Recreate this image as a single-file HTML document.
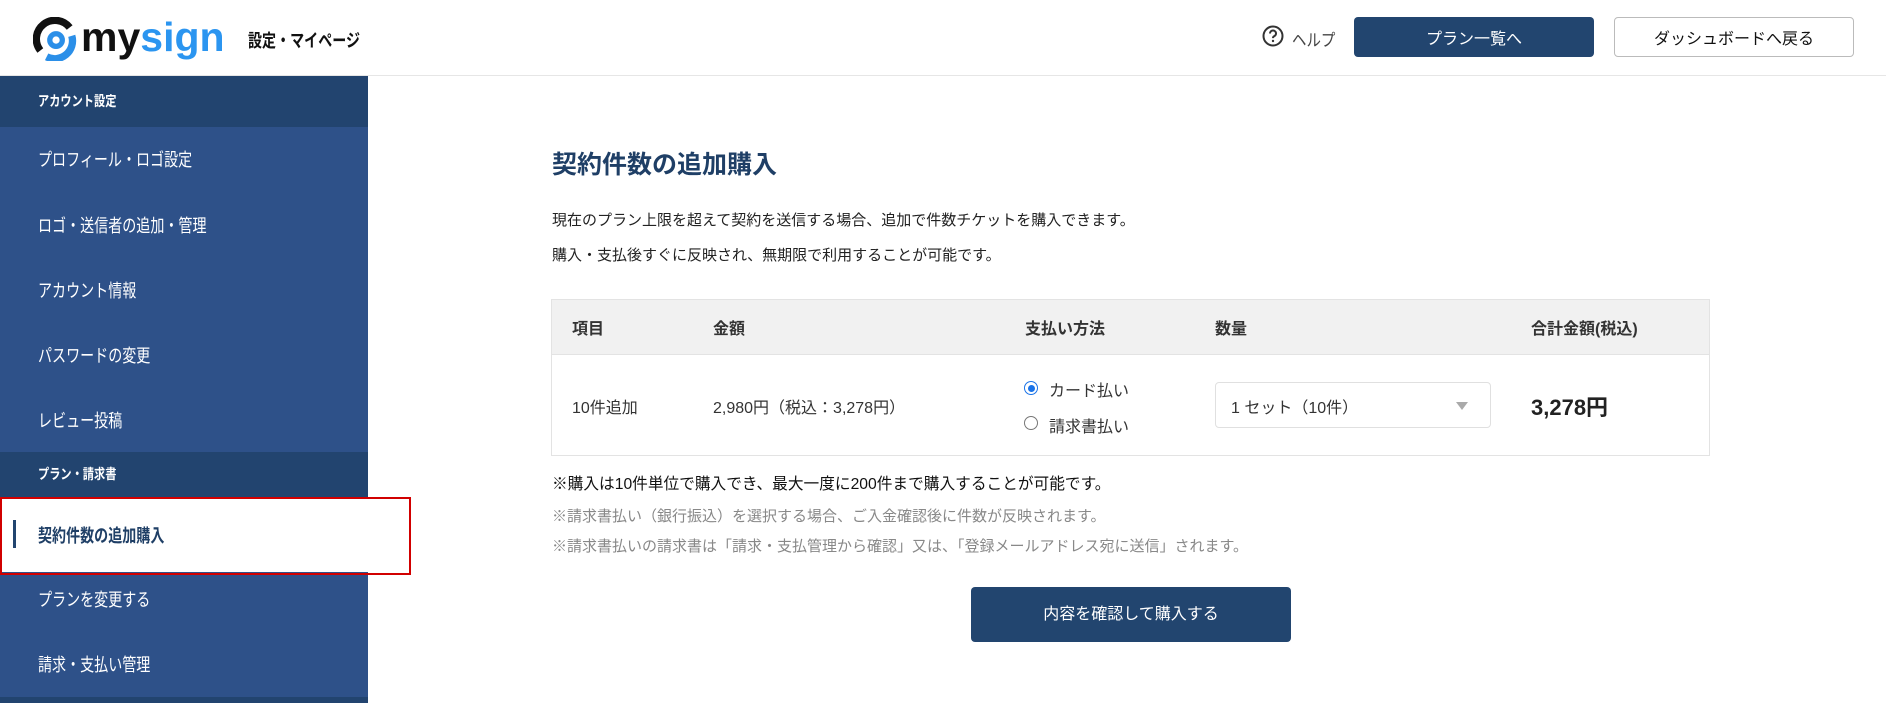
<!DOCTYPE html>
<html><head><meta charset="utf-8"><style>
*{margin:0;padding:0;box-sizing:border-box}
body{width:1886px;height:703px;overflow:hidden;background:#fff;font-family:"Liberation Sans","Noto Sans CJK JP",sans-serif;color:#222;position:relative}
.a{position:absolute;white-space:nowrap}
.hdr{position:absolute;left:0;top:0;width:1886px;height:76px;border-bottom:1px solid #e6e6e6;background:#fff}
.side{position:absolute;left:0;top:76px;width:368px;height:627px;background:#2e5189}
.sec{position:absolute;left:0;width:368px;background:#22446f;color:#fff;font-size:14px;font-weight:bold;padding-left:38px}
.sec span{display:inline-block;transform:scaleX(0.8);transform-origin:left}
.it{position:absolute;left:38px;color:#fff;font-size:18px;transform:translateY(-50%) scaleX(0.78);transform-origin:left center}
.th{position:absolute;top:327px;font-size:16px;font-weight:bold;color:#333;transform:translateY(-50%)}
.td{position:absolute;top:406px;font-size:16px;color:#333;transform:translateY(-50%)}
</style></head><body>
<div class="hdr"></div>
<svg class="a" style="left:33px;top:17px" width="44" height="44" viewBox="0 0 40 42">
<path d="M6 32 A17 17 0 1 1 34 10" fill="none" stroke="#111" stroke-width="7"/>
<path d="M12 38 A17 17 0 0 0 36 18" fill="none" stroke="#2b8fe8" stroke-width="7"/>
<circle cx="21" cy="22" r="6" fill="none" stroke="#2b8fe8" stroke-width="5"/>
</svg>
<div class="a" style="left:81px;top:14px;font-size:41px;font-weight:bold;letter-spacing:0px"><span style="color:#111">my</span><span style="color:#2b95f0">sign</span></div>
<div class="a" style="left:248px;top:27px;font-size:18px;font-weight:bold;color:#111;transform:scaleX(0.78);transform-origin:left">設定・マイページ</div>
<svg class="a" style="left:1262px;top:25px" width="22" height="22" viewBox="0 0 22 22"><circle cx="11" cy="11" r="9.5" fill="none" stroke="#333" stroke-width="2"/><path d="M8 8.5a3 3 0 1 1 4 2.8c-.8.4-1 .9-1 1.8" fill="none" stroke="#333" stroke-width="2"/><circle cx="11" cy="16" r="1.2" fill="#333"/></svg>
<div class="a" style="left:1292px;top:26px;font-size:17px;color:#444;transform:scaleX(0.85);transform-origin:left">ヘルプ</div>
<div class="a" style="left:1354px;top:17px;width:240px;height:40px;background:#22456f;border-radius:4px;color:#fff;font-size:16px;text-align:center;line-height:40px;padding-top:3px">プラン一覧へ</div>
<div class="a" style="left:1614px;top:17px;width:240px;height:40px;border:1px solid #bbb;border-radius:4px;color:#111;font-size:16px;text-align:center;line-height:38px;padding-top:3px">ダッシュボードへ戻る</div>

<div class="side"></div>
<div class="sec" style="top:76px;height:51px;line-height:51px"><span>アカウント設定</span></div>
<div class="it" style="top:159px">プロフィール・ロゴ設定</div>
<div class="it" style="top:225px">ロゴ・送信者の追加・管理</div>
<div class="it" style="top:290px">アカウント情報</div>
<div class="it" style="top:355px">パスワードの変更</div>
<div class="it" style="top:420px">レビュー投稿</div>
<div class="sec" style="top:452px;height:45px;line-height:45px"><span>プラン・請求書</span></div>
<div class="a" style="left:0;top:498px;width:368px;height:74px;background:#fff"></div>
<div class="a" style="left:13px;top:520px;width:3px;height:28px;background:#22456f"></div>
<div class="it" style="top:535px;color:#1f3f66;font-weight:bold">契約件数の追加購入</div>
<div class="a" style="left:0;top:497px;width:411px;height:78px;border:2px solid #d10000"></div>
<div class="it" style="top:599px">プランを変更する</div>
<div class="it" style="top:664px">請求・支払い管理</div>
<div class="a" style="left:0;top:697px;width:368px;height:6px;background:#22446f"></div>

<div class="a" style="left:552px;top:145px;font-size:25px;font-weight:bold;color:#1f3f66">契約件数の追加購入</div>
<div class="a" style="left:552px;top:209px;font-size:15px;color:#222">現在のプラン上限を超えて契約を送信する場合、追加で件数チケットを購入できます。</div>
<div class="a" style="left:552px;top:244px;font-size:15px;color:#222">購入・支払後すぐに反映され、無期限で利用することが可能です。</div>

<div class="a" style="left:551px;top:299px;width:1159px;height:157px;border:1px solid #e3e3e3"></div>
<div class="a" style="left:552px;top:300px;width:1157px;height:55px;background:#f1f1f1;border-bottom:1px solid #e3e3e3"></div>
<div class="th" style="left:572px">項目</div>
<div class="th" style="left:713px">金額</div>
<div class="th" style="left:1025px">支払い方法</div>
<div class="th" style="left:1215px">数量</div>
<div class="th" style="left:1531px">合計金額(税込)</div>
<div class="td" style="left:572px">10件追加</div>
<div class="td" style="left:713px">2,980円（税込：3,278円）</div>
<div class="a" style="left:1024px;top:381px;width:14px;height:14px;border-radius:50%;border:1.5px solid #1a73e8"></div>
<div class="a" style="left:1027.5px;top:384.5px;width:7px;height:7px;border-radius:50%;background:#1a73e8"></div>
<div class="a" style="left:1049px;top:377px;font-size:16px;color:#333">カード払い</div>
<div class="a" style="left:1024px;top:416px;width:14px;height:14px;border-radius:50%;border:1.5px solid #777"></div>
<div class="a" style="left:1049px;top:413px;font-size:16px;color:#333">請求書払い</div>
<div class="a" style="left:1215px;top:382px;width:276px;height:46px;border:1px solid #e0e0e0;border-radius:4px"></div>
<div class="td" style="left:1231px">1 セット（10件）</div>
<div class="a" style="left:1456px;top:402px;width:0;height:0;border-left:6px solid transparent;border-right:6px solid transparent;border-top:8px solid #aaa"></div>
<div class="td" style="left:1531px;font-size:22px;font-weight:bold;color:#222">3,278円</div>

<div class="a" style="left:552px;top:470px;font-size:16px;color:#111;transform:scaleX(0.98);transform-origin:left">※購入は10件単位で購入でき、最大一度に200件まで購入することが可能です。</div>
<div class="a" style="left:552px;top:505px;font-size:15px;color:#888">※請求書払い（銀行振込）を選択する場合、ご入金確認後に件数が反映されます。</div>
<div class="a" style="left:552px;top:535px;font-size:15px;color:#888">※請求書払いの請求書は「請求・支払管理から確認」又は、「登録メールアドレス宛に送信」されます。</div>
<div class="a" style="left:971px;top:587px;width:320px;height:55px;background:#22456f;border-radius:4px;color:#fff;font-size:16px;text-align:center;line-height:55px">内容を確認して購入する</div>
</body></html>
